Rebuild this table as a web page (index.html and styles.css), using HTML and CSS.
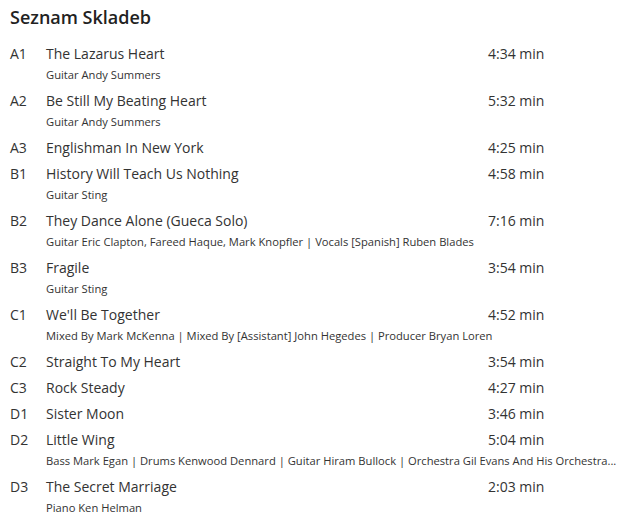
FILE: index.html
```html
<!DOCTYPE html>
<html lang="cs">
<head>
<meta charset="utf-8">
<link rel="stylesheet" href="styles.css">
</head>
<body>
<section class="tracklist">
  <h2 class="heading">Seznam Skladeb</h2>
  <ul class="tracks">
    <li class="track"><span class="pos">A1</span><span class="title">The Lazarus Heart</span><span class="dur">4:34 min</span><span class="credits">Guitar Andy Summers</span></li>
    <li class="track"><span class="pos">A2</span><span class="title">Be Still My Beating Heart</span><span class="dur">5:32 min</span><span class="credits">Guitar Andy Summers</span></li>
    <li class="track"><span class="pos">A3</span><span class="title">Englishman In New York</span><span class="dur">4:25 min</span></li>
    <li class="track"><span class="pos">B1</span><span class="title">History Will Teach Us Nothing</span><span class="dur">4:58 min</span><span class="credits">Guitar Sting</span></li>
    <li class="track"><span class="pos">B2</span><span class="title">They Dance Alone (Gueca Solo)</span><span class="dur">7:16 min</span><span class="credits">Guitar Eric Clapton, Fareed Haque, Mark Knopfler | Vocals [Spanish] Ruben Blades</span></li>
    <li class="track"><span class="pos">B3</span><span class="title">Fragile</span><span class="dur">3:54 min</span><span class="credits">Guitar Sting</span></li>
    <li class="track"><span class="pos">C1</span><span class="title">We'll Be Together</span><span class="dur">4:52 min</span><span class="credits">Mixed By Mark McKenna | Mixed By [Assistant] John Hegedes | Producer Bryan Loren</span></li>
    <li class="track"><span class="pos">C2</span><span class="title">Straight To My Heart</span><span class="dur">3:54 min</span></li>
    <li class="track"><span class="pos">C3</span><span class="title">Rock Steady</span><span class="dur">4:27 min</span></li>
    <li class="track"><span class="pos">D1</span><span class="title">Sister Moon</span><span class="dur">3:46 min</span></li>
    <li class="track"><span class="pos">D2</span><span class="title">Little Wing</span><span class="dur">5:04 min</span><span class="credits">Bass Mark Egan | Drums Kenwood Dennard | Guitar Hiram Bullock | Orchestra Gil Evans And His Orchestra...</span></li>
    <li class="track"><span class="pos">D3</span><span class="title">The Secret Marriage</span><span class="dur">2:03 min</span><span class="credits">Piano Ken Helman</span></li>
  </ul>
</section>
</body>
</html>
```
FILE: styles.css
```css
html, body {
  margin: 0;
  padding: 0;
  background: #ffffff;
}
body {
  font-family: "Open Sans", "DejaVu Sans", sans-serif;
  color: #333333;
}
.tracklist {
  padding: 0 2px 0 10px;
}
.heading {
  margin: 0 0 11px 0;
  padding-top: 4px;
  font-size: 18px;
  line-height: 26px;
  font-weight: 600;
  color: #222222;
}
.tracks {
  list-style: none;
  margin: 0;
  padding: 0;
}
.track {
  display: grid;
  grid-template-columns: 36px 1fr 131px;
}
.pos, .title, .dur {
  font-size: 14px;
  line-height: 26px;
}
.dur {
  margin-left: -1px;
}
.credits {
  grid-column: 2 / 4;
  font-size: 11.2px;
  line-height: 15px;
  padding-bottom: 6px;
  white-space: nowrap;
  overflow: hidden;
}
```
